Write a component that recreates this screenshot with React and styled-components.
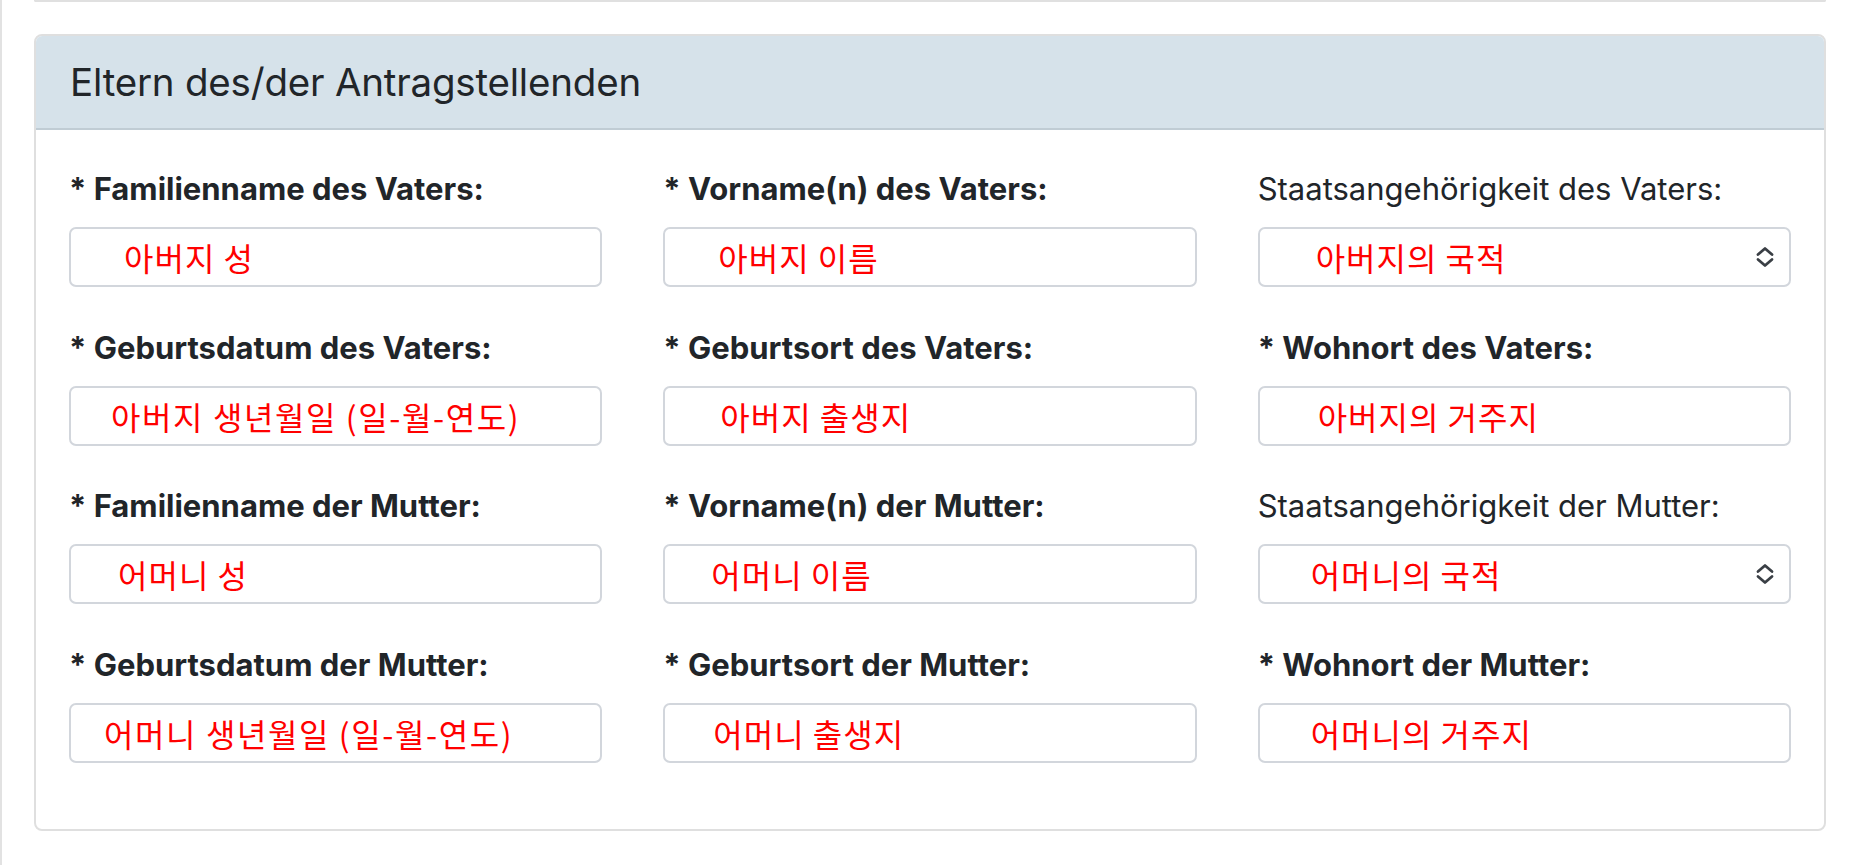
import React from 'react';
import styled, { createGlobalStyle } from 'styled-components';

const GlobalStyle = createGlobalStyle`
  html, body {
    margin: 0;
    padding: 0;
    background: #ffffff;
  }
  body {
    font-family: Inter, "Noto Sans", "Noto Sans CJK KR", sans-serif;
    color: #212529;
  }
`;

const Page = styled.div`
  min-height: 100vh;
  box-sizing: border-box;
  border-left: 2px solid #e2e2e2;
  padding: 0 28px 0 32px;
`;

const PrevCardTail = styled.div`
  height: 0;
  border: 2px solid #e0e0e0;
  border-top: none;
  border-radius: 0 0 8px 8px;
  margin-bottom: 32px;
`;

const Card = styled.section`
  border: 2px solid #dfdfdf;
  border-radius: 8px;
  overflow: hidden;
`;

const CardHeader = styled.header`
  height: 94px;
  box-sizing: border-box;
  display: flex;
  align-items: center;
  padding: 0 34px;
  background: #d6e2ea;
  border-bottom: 2px solid #c0ccd4;
`;

const Title = styled.h4`
  margin: 0;
  font-size: 38.5px;
  font-weight: 400;
  letter-spacing: -0.2px;
  color: #212529;
`;

const CardBody = styled.div`
  display: grid;
  grid-template-columns: repeat(3, 1fr);
  column-gap: 61px;
  padding: 33px 33px 32px;
`;

const Field = styled.div`
  margin-bottom: 34.5px;
`;

const Label = styled.label`
  display: block;
  font-size: 31px;
  line-height: 43.5px;
  padding-top: 4px;
  margin-bottom: 16.5px;
  font-weight: ${p => (p.$required ? 700 : 400)};
  color: #212529;
  white-space: nowrap;
`;

const InputBox = styled.div`
  position: relative;
  height: 60px;
  box-sizing: border-box;
  border: 2px solid #d2d6dc;
  border-radius: 7px;
  display: flex;
  align-items: center;
  padding-left: ${p => p.$indent}px;
  font-family: "Noto Sans CJK KR", sans-serif;
  font-size: 32px;
  letter-spacing: ${p => (p.$wide ? 1.6 : 1)}px;
  color: #ff0000;
  white-space: nowrap;
`;

const SelectArrow = styled.svg`
  position: absolute;
  right: 14px;
  top: 50%;
  transform: translateY(-50%);
  width: 20px;
  height: 22px;
`;

const Chevrons = () => (
  <SelectArrow viewBox="0 0 20 22" fill="none" stroke="#3a3f45" strokeWidth="2.8" strokeLinecap="round" strokeLinejoin="round">
    <polyline points="3,8.5 10,2.5 17,8.5" />
    <polyline points="3,13.5 10,19.5 17,13.5" />
  </SelectArrow>
);

const fields = [
  { label: 'Familienname des Vaters:', req: true, value: '아버지 성', indent: 53 },
  { label: 'Vorname(n) des Vaters:', req: true, value: '아버지 이름', indent: 53 },
  { label: 'Staatsangehörigkeit des Vaters:', req: false, value: '아버지의 국적', indent: 56, select: true },
  { label: 'Geburtsdatum des Vaters:', req: true, value: '아버지 생년월일 (일-월-연도)', indent: 40, wide: true },
  { label: 'Geburtsort des Vaters:', req: true, value: '아버지 출생지', indent: 55 },
  { label: 'Wohnort des Vaters:', req: true, value: '아버지의 거주지', indent: 58 },
  { label: 'Familienname der Mutter:', req: true, value: '어머니 성', indent: 47 },
  { label: 'Vorname(n) der Mutter:', req: true, value: '어머니 이름', indent: 46 },
  { label: 'Staatsangehörigkeit der Mutter:', req: false, value: '어머니의 국적', indent: 51, select: true },
  { label: 'Geburtsdatum der Mutter:', req: true, value: '어머니 생년월일 (일-월-연도)', indent: 33, wide: true },
  { label: 'Geburtsort der Mutter:', req: true, value: '어머니 출생지', indent: 48 },
  { label: 'Wohnort der Mutter:', req: true, value: '어머니의 거주지', indent: 51 },
];

export default function App() {
  return (
    <>
      <GlobalStyle />
      <Page>
        <PrevCardTail />
        <Card>
          <CardHeader>
            <Title>Eltern des/der Antragstellenden</Title>
          </CardHeader>
          <CardBody>
            {fields.map(f => (
              <Field key={f.label}>
                <Label $required={f.req}>{f.req ? '* ' : ''}{f.label}</Label>
                <InputBox $indent={f.indent} $wide={f.wide}>
                  {f.value}
                  {f.select && <Chevrons />}
                </InputBox>
              </Field>
            ))}
          </CardBody>
        </Card>
      </Page>
    </>
  );
}
